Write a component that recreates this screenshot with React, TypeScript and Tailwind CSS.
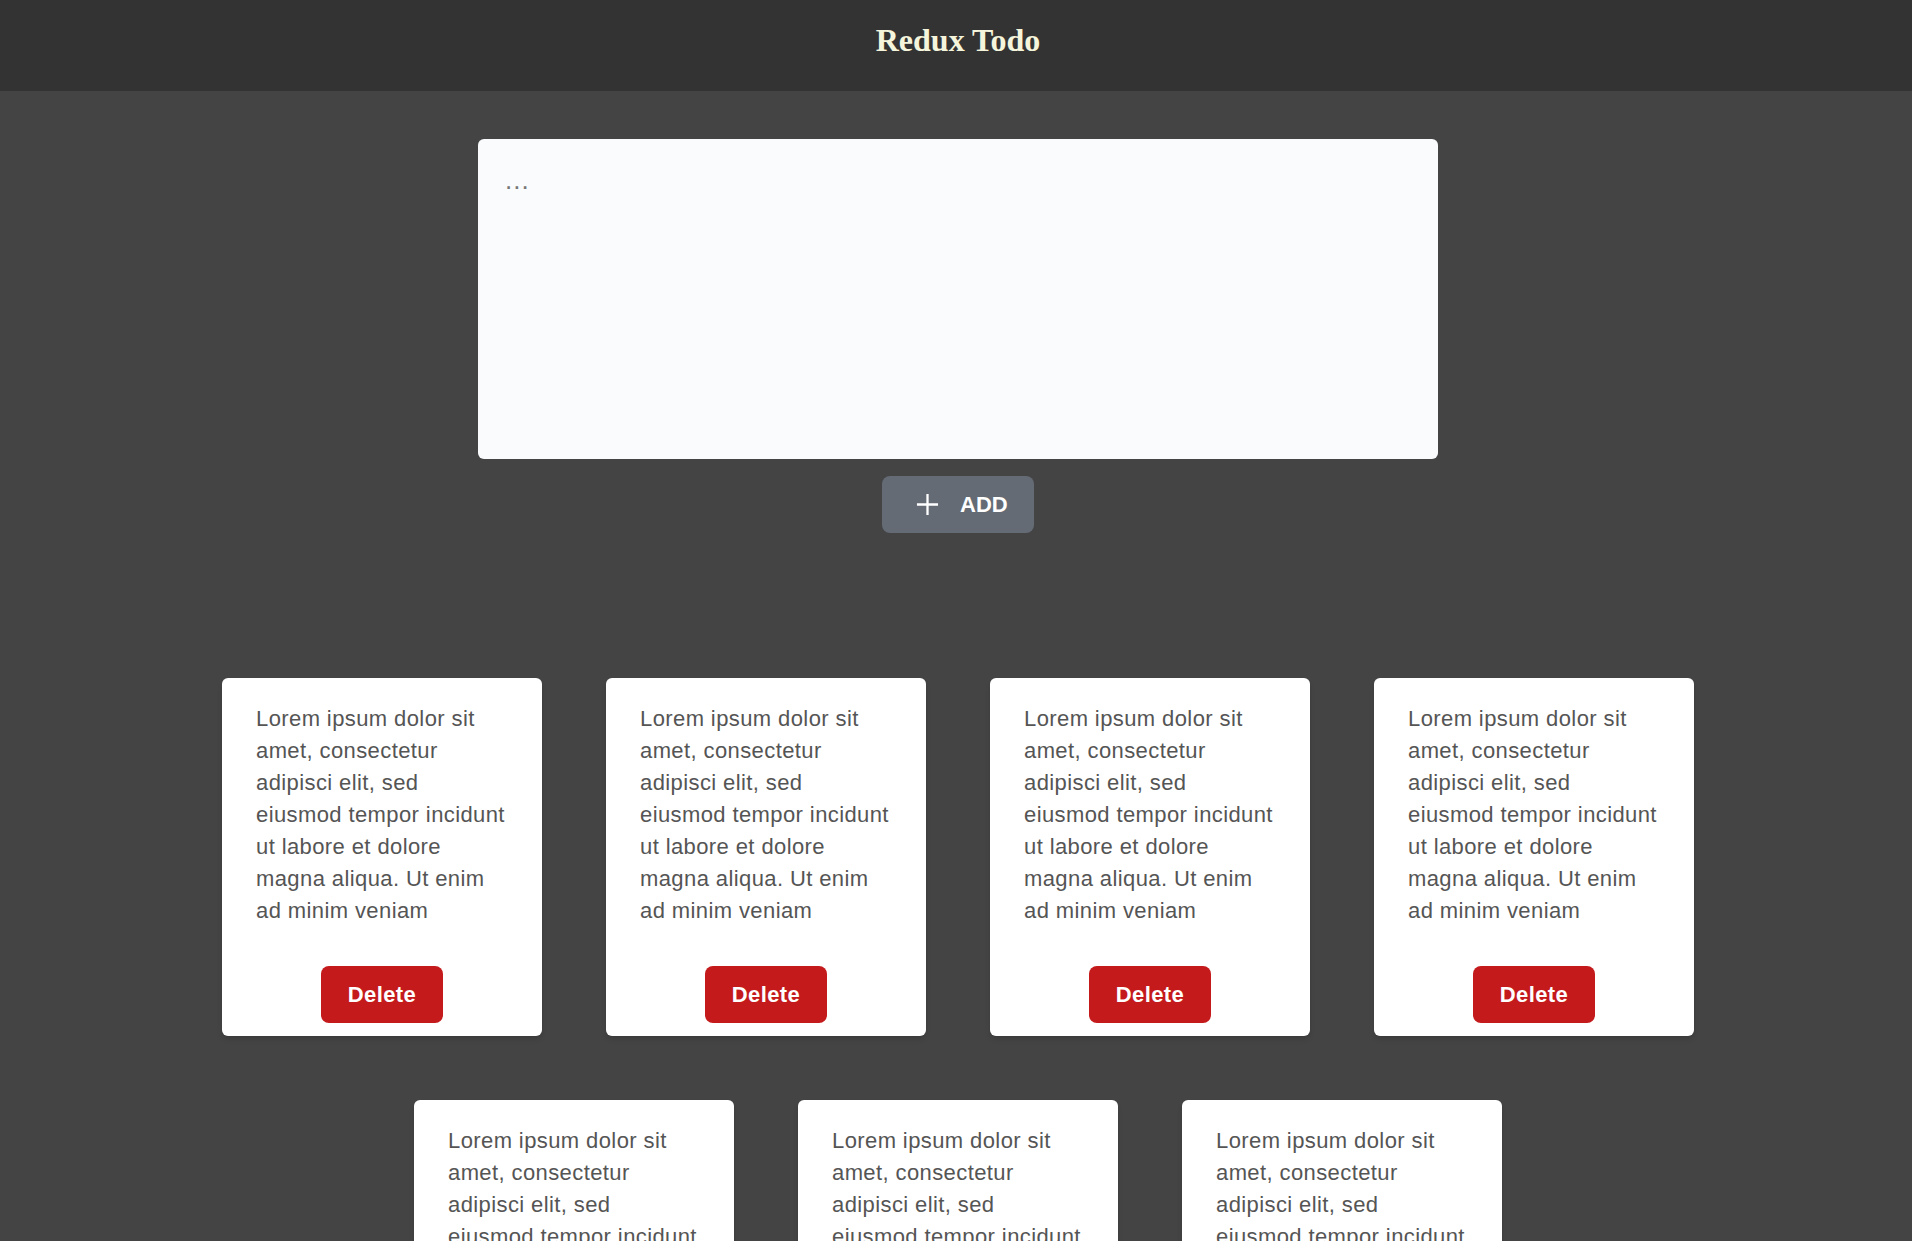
import React from 'react';

const LOREM =
  'Lorem ipsum dolor sit amet, consectetur adipisci elit, sed eiusmod tempor incidunt ut labore et dolore magna aliqua. Ut enim ad minim veniam';

const todos = Array.from({ length: 7 }, (_, i) => ({ id: i + 1, text: LOREM }));

const sans = { fontFamily: '"Liberation Sans", Arial, sans-serif' };

function PlusIcon() {
  return (
    <svg width="23" height="23" viewBox="0 0 24 24" fill="none" stroke="white" strokeWidth="2.4" strokeLinecap="butt">
      <path d="M12 1v22M1 12h22" />
    </svg>
  );
}

function TodoCard({ text }: { text: string }) {
  return (
    <div className="w-[320px] bg-white rounded-md shadow-md flex flex-col pt-[25px] pb-[13px] px-[34px]">
      <p className="text-[22px] leading-[32px] tracking-[0.4px] text-[#555]" style={sans}>
        {text}
      </p>
      <div className="flex justify-center mt-[39px]">
        <button
          className="w-[122px] h-[57px] rounded-lg bg-[#c41a1c] text-white font-bold text-[22px] tracking-[0.4px]"
          style={sans}
        >
          Delete
        </button>
      </div>
    </div>
  );
}

export default function App() {
  return (
    <div className="min-h-screen bg-[#444444]">
      {/* Header */}
      <header className="h-[91px] bg-[#333333] flex justify-center pt-[24px] pl-1">
        <h1
          className="text-[32px] leading-none font-bold text-[#f5f5dc]"
          style={{ fontFamily: '"Liberation Serif", "Times New Roman", serif' }}
        >
          Redux Todo
        </h1>
      </header>

      <div className="pl-1">
        {/* Input */}
        <div className="flex flex-col items-center pt-[48px]">
          <textarea
            placeholder="..."
            className="w-[960px] h-[320px] rounded-md bg-[#fafbfd] pl-[27px] pt-[26px] text-[26px] leading-[30px] tracking-[1px] text-[#333] placeholder:text-[#777] resize-none outline-none"
            style={sans}
          />
          <button
            className="mt-[17px] w-[152px] h-[57px] rounded-lg bg-[#646b75] flex items-center pl-[34px] gap-[21px] text-white font-bold text-[22px]"
            style={sans}
          >
            <PlusIcon />
            <span>ADD</span>
          </button>
        </div>

        {/* Todo list */}
        <div className="w-[1500px] mx-auto flex flex-wrap justify-center gap-16 pt-[145px] pb-16">
          {todos.map((t) => (
            <TodoCard key={t.id} text={t.text} />
          ))}
        </div>
      </div>
    </div>
  );
}
